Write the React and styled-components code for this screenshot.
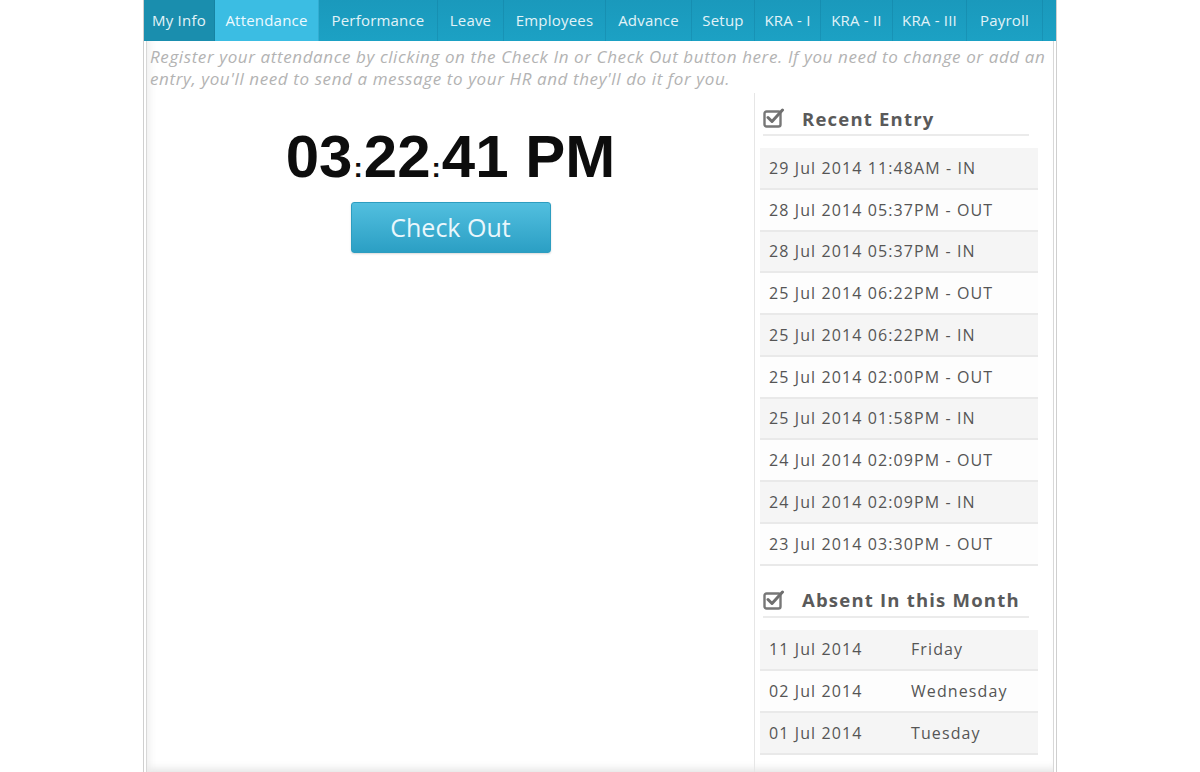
import React from "react";
import styled, { createGlobalStyle } from "styled-components";

const Global = createGlobalStyle`
  html, body { margin: 0; padding: 0; background: #ffffff; }
  body { font-family: "Open Sans", "Liberation Sans", sans-serif; }
  * { box-sizing: border-box; }
`;

const Page = styled.div`
  width: 1200px;
  height: 772px;
  overflow: hidden;
  display: flex;
  justify-content: center;
`;

const Frame = styled.div`
  width: 914px;
  height: 100%;
  display: flex;
  flex-direction: column;
  border-left: 1px solid #cfcfcf;
  border-right: 1px solid #cfcfcf;
`;

const Nav = styled.nav`
  height: 41px;
  flex: none;
  display: flex;
  background: linear-gradient(#1a99bc, #1ca1c4);
`;

const Tab = styled.div`
  width: ${(p) => p.$w}px;
  flex: none;
  display: flex;
  align-items: center;
  justify-content: center;
  padding-bottom: 1px;
  font-size: 15px;
  letter-spacing: 0.2px;
  color: ${(p) => (p.$active ? "#eefaff" : "#e2f3f8")};
  background: ${(p) =>
    p.$active ? "#3bbde3" : p.$first ? "#1a8eae" : "transparent"};
  border-right: 1px solid rgba(0, 60, 90, 0.12);
`;

const Shell = styled.div`
  flex: 1;
  display: flex;
  padding: 0 2px;
  min-height: 0;
`;

const Panel = styled.div`
  flex: 1;
  display: flex;
  flex-direction: column;
  border-left: 1px solid #d8d8d8;
  border-right: 1px solid #d8d8d8;
  box-shadow: inset 9px 0 8px -7px #ececec, inset 0 -9px 8px -6px #e4e4e4;
`;

const Intro = styled.p`
  margin: 0;
  padding: 5px 4px 0 3px;
  font-size: 17px;
  font-style: italic;
  line-height: 22px;
  color: #b3b3b3;
  letter-spacing: 0.6px;
`;

const Body = styled.div`
  flex: 1;
  display: flex;
  margin-top: 3px;
`;

const ClockArea = styled.section`
  flex: 1;
  display: flex;
  flex-direction: column;
  align-items: center;
  padding-top: 33px;
`;

const Clock = styled.div`
  font-family: "Liberation Sans", Arial, sans-serif;
  font-weight: bold;
  font-size: 60px;
  line-height: 61px;
  color: #0d0d0d;
  white-space: nowrap;
`;

const Colon = styled.span`
  font-size: 28px;
  margin: 0 1px;
`;

const Button = styled.button`
  margin-top: 4px;
  width: 200px;
  height: 51px;
  border: 1px solid #2d9dc0;
  border-radius: 3px;
  background: linear-gradient(#52bfdf, #2b9fc4);
  color: #eaf7fc;
  font-family: "Open Sans", sans-serif;
  font-size: 25px;
  box-shadow: 0 1px 2px rgba(0, 0, 0, 0.15);
  padding: 0 0 2px;
`;

const Side = styled.aside`
  width: 299px;
  flex: none;
  border-left: 1px solid #e6e6e6;
  padding: 0 15px 0 5px;
`;

const Heading = styled.h3`
  margin: ${(p) => p.$mt}px 9px 12px 3px;
  height: 34px;
  display: flex;
  align-items: center;
  gap: 17px;
  border-bottom: 2px solid #ebebeb;
  font-size: 18.5px;
  font-weight: bold;
  color: #5a5a5a;
  letter-spacing: 1.2px;
`;

const Row = styled.div`
  height: 41.75px;
  display: flex;
  align-items: center;
  padding-left: 9px;
  border-bottom: 2px solid #e9e9e9;
  background: ${(p) => (p.$odd ? "#f5f5f5" : "#fdfdfd")};
  font-size: 16px;
  color: #555555;
  letter-spacing: 1.1px;
`;

const DateCell = styled.span`
  width: 142px;
  flex: none;
`;

const CheckIcon = () => (
  <svg width="22" height="20" viewBox="0 0 22 20" aria-hidden="true">
    <rect x="1.5" y="3.5" width="16" height="15" rx="2" fill="none" stroke="#777" strokeWidth="2.4" />
    <path d="M5 9.5 L9 13.5 L19.5 2" fill="none" stroke="#6f6f6f" strokeWidth="3" strokeLinecap="round" strokeLinejoin="round" />
  </svg>
);

const tabs = [
  ["My Info", 71],
  ["Attendance", 104],
  ["Performance", 119],
  ["Leave", 66],
  ["Employees", 102],
  ["Advance", 86],
  ["Setup", 63],
  ["KRA - I", 66],
  ["KRA - II", 72],
  ["KRA - III", 74],
  ["Payroll", 76],
];

const entries = [
  "29 Jul 2014 11:48AM - IN",
  "28 Jul 2014 05:37PM - OUT",
  "28 Jul 2014 05:37PM - IN",
  "25 Jul 2014 06:22PM - OUT",
  "25 Jul 2014 06:22PM - IN",
  "25 Jul 2014 02:00PM - OUT",
  "25 Jul 2014 01:58PM - IN",
  "24 Jul 2014 02:09PM - OUT",
  "24 Jul 2014 02:09PM - IN",
  "23 Jul 2014 03:30PM - OUT",
];

const absents = [
  ["11 Jul 2014", "Friday"],
  ["02 Jul 2014", "Wednesday"],
  ["01 Jul 2014", "Tuesday"],
];

export default function App() {
  return (
    <Page>
      <Global />
      <Frame>
        <Nav>
          {tabs.map(([label, w], i) => (
            <Tab key={label} $w={w} $first={i === 0} $active={label === "Attendance"}>
              {label}
            </Tab>
          ))}
        </Nav>
        <Shell>
          <Panel>
            <Intro>
              Register your attendance by clicking on the Check In or Check Out button here. If you need to change or add an entry, you'll need to send a message to your HR and they'll do it for you.
            </Intro>
            <Body>
              <ClockArea>
                <Clock>
                  03<Colon>:</Colon>22<Colon>:</Colon>41 PM
                </Clock>
                <Button>Check Out</Button>
              </ClockArea>
              <Side>
                <Heading $mt={9}>
                  <CheckIcon />
                  Recent Entry
                </Heading>
                {entries.map((e, i) => (
                  <Row key={i} $odd={i % 2 === 0}>
                    {e}
                  </Row>
                ))}
                <Heading $mt={18}>
                  <CheckIcon />
                  Absent In this Month
                </Heading>
                {absents.map(([d, day], i) => (
                  <Row key={d} $odd={i % 2 === 0}>
                    <DateCell>{d}</DateCell>
                    {day}
                  </Row>
                ))}
              </Side>
            </Body>
          </Panel>
        </Shell>
      </Frame>
    </Page>
  );
}
